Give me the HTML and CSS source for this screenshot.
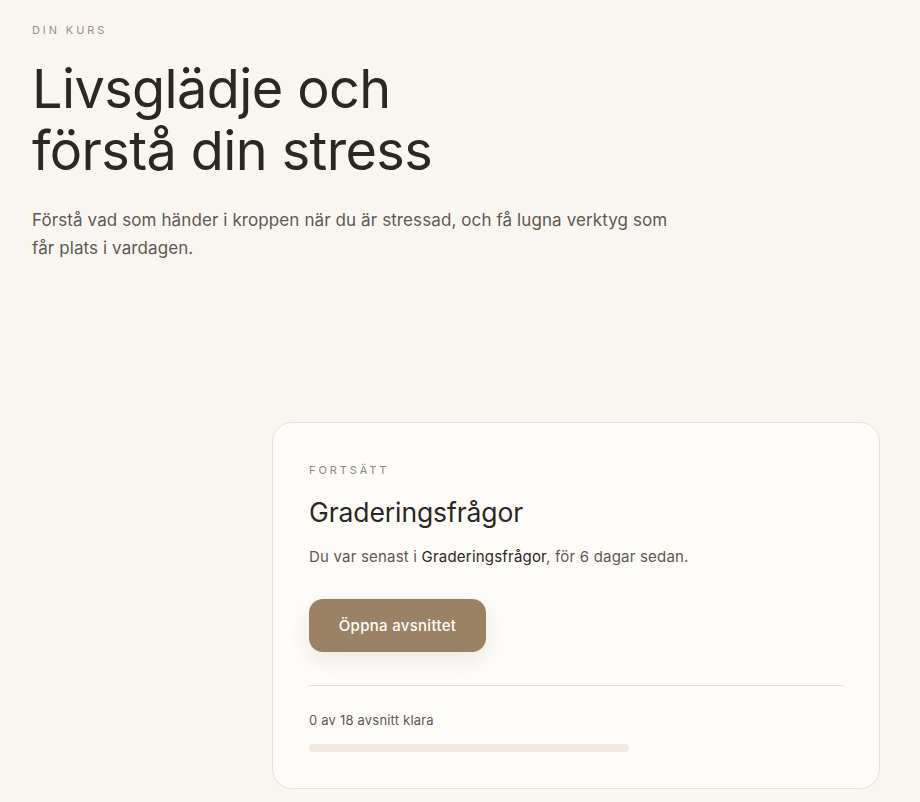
FILE: index.html
```html
<!DOCTYPE html>
<html lang="sv">
<head>
    <meta charset="UTF-8">
    <meta name="viewport" content="width=device-width, initial-scale=1.0">
    <title>Din kurs</title>
    <link rel="stylesheet" href="styles.css">
</head>
<body>
    <main class="page">
        <header class="hero">
            <p class="eyebrow">Din kurs</p>
            <h1>Livsglädje och<br>förstå din stress</h1>
            <p class="intro">Förstå vad som händer i kroppen när du är stressad, och få lugna verktyg som får plats i vardagen.</p>
        </header>

        <section class="layout">
            <div class="side"></div>
            <div class="card">
                <p class="card-label">Fortsätt</p>
                <h2>Graderingsfrågor</h2>
                <p class="last-seen">Du var senast i <span class="strong">Graderingsfrågor</span>, för 6 dagar sedan.</p>
                <button class="open-btn" type="button">Öppna avsnittet</button>
                <div class="progress">
                    <p class="progress-text">0 av 18 avsnitt klara</p>
                    <div class="bar"><div class="bar-fill" style="width: 0%"></div></div>
                </div>
            </div>
        </section>
    </main>
</body>
</html>
```

FILE: styles.css
```css
* {
    box-sizing: border-box;
}

body {
    margin: 0;
    font-family: Inter, "Noto Sans", sans-serif;
    background-color: #f9f6f2;
    color: #2b2722;
}

.page {
    padding: 22px 40px 0 32px;
}

.eyebrow {
    margin: 0;
    font-size: 11px;
    letter-spacing: 2.9px;
    text-transform: uppercase;
    color: #a08d78;
    line-height: 16px;
}

h1 {
    margin: 20px 0 0;
    font-size: 54px;
    font-weight: 400;
    line-height: 62px;
    letter-spacing: -0.6px;
    color: #2b2722;
}

.intro {
    margin: 24px 0 0;
    max-width: 660px;
    font-size: 17px;
    line-height: 28px;
    letter-spacing: 0.1px;
    color: #5f5850;
}

.layout {
    display: grid;
    grid-template-columns: 216px 1fr;
    gap: 24px;
    margin-top: 160px;
}

.card {
    background-color: #fdfcf9;
    border: 1px solid #e9e1d6;
    border-radius: 20px;
    padding: 39px 36px 36px;
}

.card-label {
    margin: 0;
    font-size: 11px;
    letter-spacing: 2.9px;
    text-transform: uppercase;
    color: #8c8782;
    line-height: 16px;
}

h2 {
    margin: 17px 0 0;
    font-size: 26.5px;
    font-weight: 400;
    line-height: 34px;
    letter-spacing: -0.1px;
    color: #2b2722;
}

.last-seen {
    margin: 17px 0 0;
    font-size: 15px;
    line-height: 22px;
    letter-spacing: 0.2px;
    color: #5f5850;
}

.last-seen .strong {
    color: #2b2722;
}

.open-btn {
    display: block;
    margin-top: 31px;
    width: 177px;
    height: 53px;
    border: none;
    border-radius: 14px;
    background-color: #9b8264;
    color: #fff;
    font-family: inherit;
    font-size: 15px;
    font-weight: 500;
    letter-spacing: 0.3px;
    box-shadow: 0 8px 20px rgba(120, 95, 60, 0.12);
}

.progress {
    margin-top: 33px;
    padding-top: 25px;
    border-top: 1px solid #e8e0d5;
}

.progress-text {
    margin: 0;
    font-size: 13px;
    line-height: 18px;
    letter-spacing: 0.2px;
    color: #5f5850;
}

.bar {
    margin-top: 15px;
    width: 320px;
    height: 8px;
    border-radius: 4px;
    background-color: #f1e9df;
}

.bar-fill {
    height: 100%;
    border-radius: 4px;
    background-color: #9b8264;
}
```
